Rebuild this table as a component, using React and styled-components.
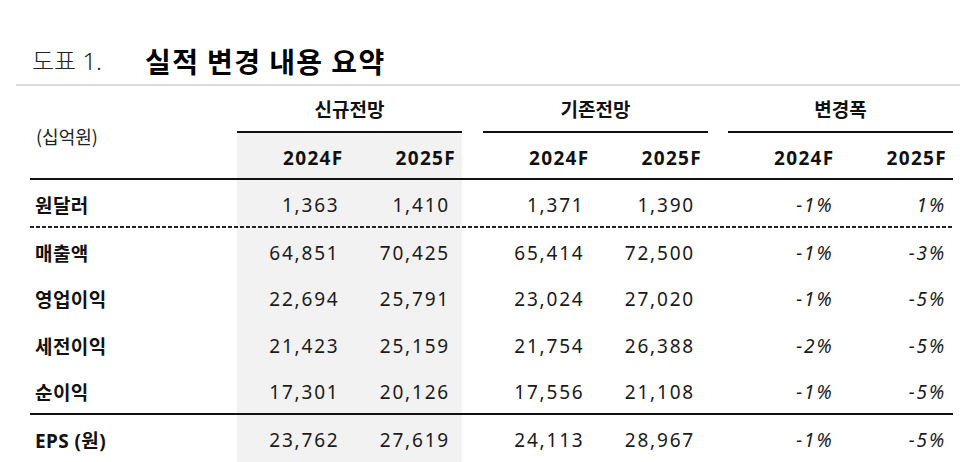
import React from 'react'
import styled, { createGlobalStyle } from 'styled-components'

const COLS = '207px 112.5px 112.5px 21px 112.5px 112.5px 20px 112.5px 112.5px'

const GlobalStyle = createGlobalStyle`
  html, body {
    margin: 0;
    padding: 0;
    background: #fff;
  }
  body {
    font-family: "Noto Sans", "Noto Sans CJK KR", sans-serif;
    color: #111;
  }
`;

const Page = styled.div`
  width: 960px;
  height: 462px;
  overflow: hidden;
  background: #fff;
`;

const TitleBar = styled.div`
  height: 86px;
  box-sizing: border-box;
  margin-left: 16px;
  padding: 0 0 8px 16px;
  display: flex;
  align-items: flex-end;
  border-bottom: 2px solid #dcdcdc;
`;

const FigureNo = styled.span`
  width: 113px;
  font-family: "Noto Sans", "Noto Sans CJK KR", sans-serif;
  font-weight: 300;
  font-size: 24px;
  line-height: 30px;
  color: #222;
`;

const FigureTitle = styled.h1`
  margin: 0;
  font-family: "Noto Sans CJK KR", sans-serif;
  font-weight: 700;
  font-size: 28px;
  line-height: 30px;
  letter-spacing: 1.4px;
  color: #000;
`;

const Table = styled.div`
  margin-left: 30px;
  width: 923px;
`;

const Head = styled.div`
  display: grid;
  grid-template-columns: ${COLS};
  grid-template-rows: 47px 45px;
  border-bottom: 2px solid #111;
`;

const UnitCell = styled.div`
  grid-row: 1 / span 2;
  display: flex;
  align-items: center;
  padding: 7px 0 0 6px;
  font-family: "Noto Sans CJK KR", sans-serif;
  font-size: 18px;
  color: #222;
`;

const GroupCell = styled.div`
  grid-column: span 2;
  display: flex;
  align-items: center;
  justify-content: center;
  border-bottom: 2px solid #111;
  font-family: "Noto Sans CJK KR", sans-serif;
  font-weight: 700;
  font-size: 19px;
`;

const Gap = styled.div``;

const YearCell = styled.div`
  display: flex;
  align-items: center;
  justify-content: flex-end;
  padding: 4px 6px 0 0;
  background: ${p => (p.$shade ? '#f2f2f2' : 'transparent')};
  font-weight: 700;
  font-size: 19px;
  letter-spacing: 1.3px;
`;

const Body = styled.div`
  background: linear-gradient(
    to right,
    transparent 207px,
    #f2f2f2 207px,
    #f2f2f2 432px,
    transparent 432px
  );
`;

const Row = styled.div`
  display: grid;
  grid-template-columns: ${COLS};
  height: ${p => p.$h}px;
  box-sizing: content-box;
  ${p => p.$rule === 'dotted' && `
    padding-bottom: 2px;
    background: repeating-linear-gradient(to right, #222 0 4px, transparent 4px 6px) left bottom / 100% 2px no-repeat;
  `}
  ${p => p.$rule === 'solid' && `
    border-bottom: 2px solid #111;
  `}
`;

const Label = styled.div`
  display: flex;
  align-items: center;
  padding: 3px 0 0 5px;
  font-family: "Noto Sans", "Noto Sans CJK KR", sans-serif;
  font-weight: 700;
  font-size: 19px;
  letter-spacing: 0.4px;
`;

const Num = styled.div`
  display: flex;
  align-items: center;
  justify-content: flex-end;
  padding: 3px ${p => p.$pad}px 0 0;
  font-size: 19px;
  letter-spacing: 1.8px;
  color: #1a1a1a;
`;

const Pct = styled(Num)`
  font-style: italic;
  letter-spacing: 1.9px;
`;

const rows = [
  { label: '원달러', vals: ['1,363', '1,410', '1,371', '1,390'], pct: ['-1%', '1%'], h: 46, rule: 'dotted' },
  { label: '매출액', vals: ['64,851', '70,425', '65,414', '72,500'], pct: ['-1%', '-3%'], h: 46 },
  { label: '영업이익', vals: ['22,694', '25,791', '23,024', '27,020'], pct: ['-1%', '-5%'], h: 46.5 },
  { label: '세전이익', vals: ['21,423', '25,159', '21,754', '26,388'], pct: ['-2%', '-5%'], h: 47 },
  { label: '순이익', vals: ['17,301', '20,126', '17,556', '21,108'], pct: ['-1%', '-5%'], h: 45, rule: 'solid' },
  { label: 'EPS (원)', vals: ['23,762', '27,619', '24,113', '28,967'], pct: ['-1%', '-5%'], h: 47 },
]

const groups = ['신규전망', '기존전망', '변경폭']

export default function App() {
  return (
    <Page>
      <GlobalStyle />
      <TitleBar>
        <FigureNo>도표 1.</FigureNo>
        <FigureTitle>실적 변경 내용 요약</FigureTitle>
      </TitleBar>
      <Table>
        <Head>
          <UnitCell>(십억원)</UnitCell>
          <GroupCell>{groups[0]}</GroupCell>
          <Gap />
          <GroupCell>{groups[1]}</GroupCell>
          <Gap />
          <GroupCell>{groups[2]}</GroupCell>
          <YearCell $shade>2024F</YearCell>
          <YearCell $shade>2025F</YearCell>
          <Gap />
          <YearCell>2024F</YearCell>
          <YearCell>2025F</YearCell>
          <Gap />
          <YearCell>2024F</YearCell>
          <YearCell>2025F</YearCell>
        </Head>
        <Body>
          {rows.map(r => (
            <Row key={r.label} $h={r.h} $rule={r.rule}>
              <Label>{r.label}</Label>
              <Num $pad={10}>{r.vals[0]}</Num>
              <Num $pad={12}>{r.vals[1]}</Num>
              <Gap />
              <Num $pad={11}>{r.vals[2]}</Num>
              <Num $pad={13}>{r.vals[3]}</Num>
              <Gap />
              <Pct $pad={7}>{r.pct[0]}</Pct>
              <Pct $pad={7}>{r.pct[1]}</Pct>
            </Row>
          ))}
        </Body>
      </Table>
    </Page>
  )
}
